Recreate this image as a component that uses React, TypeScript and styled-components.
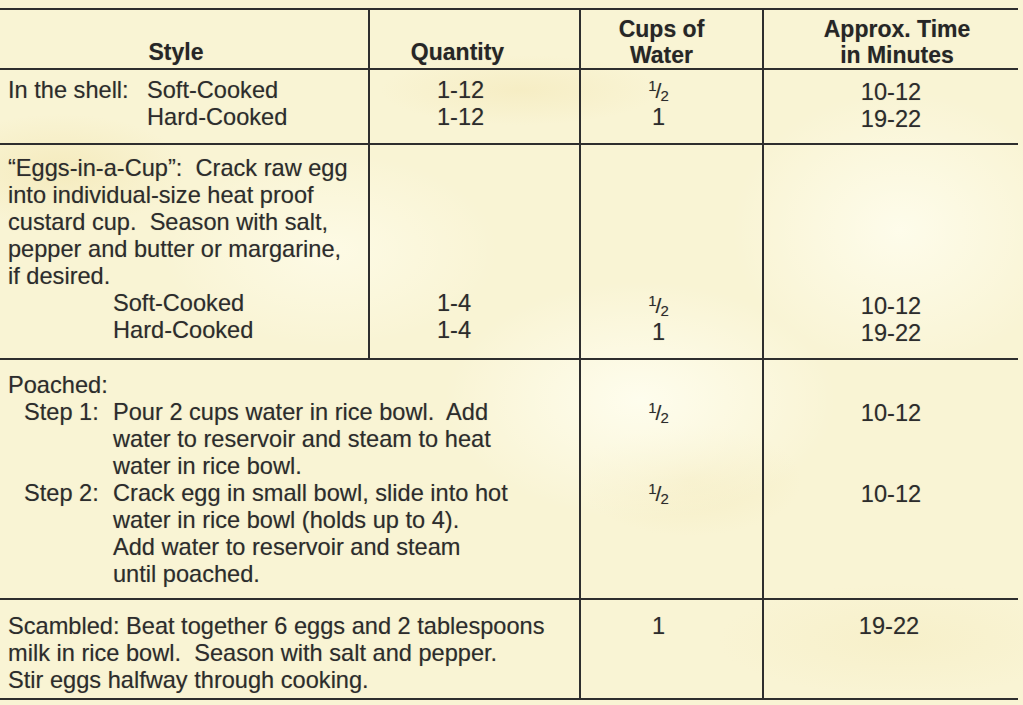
import React from "react";
import styled, { createGlobalStyle } from "styled-components";

const GlobalStyle = createGlobalStyle`
  html, body {
    margin: 0;
    padding: 0;
  }
  body {
    width: 1023px;
    height: 705px;
    overflow: hidden;
    background-color: #f9f4d4;
    background-image:
      radial-gradient(ellipse 280px 170px at 640px 400px, rgba(255, 254, 240, 0.9), transparent 70%),
      radial-gradient(ellipse 240px 200px at 900px 230px, rgba(255, 254, 240, 0.8), transparent 70%),
      radial-gradient(ellipse 240px 140px at 330px 250px, rgba(255, 253, 236, 0.7), transparent 70%),
      radial-gradient(ellipse 180px 80px at 60px 170px, rgba(243, 231, 180, 0.7), transparent 70%),
      radial-gradient(ellipse 200px 50px at 520px 90px, rgba(244, 233, 186, 0.6), transparent 70%),
      radial-gradient(ellipse 160px 80px at 690px 480px, rgba(244, 234, 188, 0.6), transparent 70%),
      radial-gradient(ellipse 260px 80px at 900px 640px, rgba(245, 236, 192, 0.5), transparent 70%);
    font-family: "Liberation Sans", Arial, sans-serif;
    color: #2c2c2c;
  }
`;

const Page = styled.div`
  padding-top: 8px;
`;

const LINE = "2px solid #2e2e2e";

const Table = styled.div`
  display: grid;
  grid-template-columns: 370px 211px 183px 254px;
  grid-template-rows: 62px 75px 215px 240px 100px;
  width: 1018px;
  font-size: 23.6px;
  text-shadow: 0 0 1px rgba(40, 40, 40, 0.3);
`;

const HeadCell = styled.div<{ $pl?: number; $pr?: number; $pb?: number; $last?: boolean }>`
  display: flex;
  flex-direction: column;
  justify-content: flex-end;
  align-items: center;
  text-align: center;
  font-weight: bold;
  font-size: 23px;
  line-height: 26px;
  border-top: ${LINE};
  border-bottom: ${LINE};
  border-right: ${(p) => (p.$last ? "none" : LINE)};
  padding-left: ${(p) => p.$pl ?? 0}px;
  padding-right: ${(p) => p.$pr ?? 0}px;
  padding-bottom: ${(p) => p.$pb ?? 0}px;
  color: #262626;
`;

const Cell = styled.div<{
  $top: number;
  $span?: number;
  $last?: boolean;
  $align?: "left" | "center";
  $pl?: number;
  $pr?: number;
}>`
  grid-column: span ${(p) => p.$span ?? 1};
  border-bottom: ${LINE};
  border-right: ${(p) => (p.$last ? "none" : LINE)};
  padding-top: ${(p) => p.$top}px;
  padding-left: ${(p) => p.$pl ?? 8}px;
  padding-right: ${(p) => p.$pr ?? 0}px;
  text-align: ${(p) => p.$align ?? "left"};
  line-height: 27px;
`;

const Line = styled.div`
  white-space: pre;
  min-height: 27px;
`;

const Shell = styled.div`
  display: grid;
  grid-template-columns: 139px auto;
`;

const Indented = styled.div<{ $indent: number }>`
  padding-left: ${(p) => p.$indent}px;
`;

const Steps = styled.div`
  display: grid;
  grid-template-columns: 89px 1fr;
  margin-left: 16px;
`;

const Frac = styled.span`
  display: inline-block;
  line-height: 1;
  white-space: nowrap;
`;

const Num = styled.span`
  font-size: 15px;
  vertical-align: 0.45em;
`;

const Slash = styled.span`
  font-size: 21px;
  margin: 0 -1px;
`;

const Den = styled.span`
  font-size: 15px;
  vertical-align: -0.2em;
`;

const Half = () => (
  <Frac>
    <Num>1</Num>
    <Slash>/</Slash>
    <Den>2</Den>
  </Frac>
);

const renderLines = (lines: React.ReactNode[]) =>
  lines.map((l, i) => <Line key={i}>{l}</Line>);

export default function App() {
  return (
    <>
      <GlobalStyle />
      <Page>
        <Table>
          <HeadCell $pr={16} $pb={3}>Style</HeadCell>
          <HeadCell $pr={34} $pb={3}>Quantity</HeadCell>
          <HeadCell $pr={20}>
            <div>Cups of</div>
            <div>Water</div>
          </HeadCell>
          <HeadCell $pl={12} $last>
            <div>Approx. Time</div>
            <div>in Minutes</div>
          </HeadCell>

          {/* in the shell */}
          <Cell $top={7}>
            <Shell>
              <Line>In the shell:</Line>
              <Line>Soft-Cooked</Line>
              <Line />
              <Line>Hard-Cooked</Line>
            </Shell>
          </Cell>
          <Cell $top={7} $pl={67}>
            {renderLines(["1-12", "1-12"])}
          </Cell>
          <Cell $top={7} $align="center" $pl={0} $pr={26}>
            {renderLines([<Half key="h" />, "1"])}
          </Cell>
          <Cell $top={9} $align="center" $pl={0} $last>
            {renderLines(["10-12", "19-22"])}
          </Cell>

          {/* eggs in a cup */}
          <Cell $top={10}>
            {renderLines([
              "\u201cEggs-in-a-Cup\u201d:  Crack raw egg",
              "into individual-size heat proof",
              "custard cup.  Season with salt,",
              "pepper and butter or margarine,",
              "if desired.",
            ])}
            <Indented $indent={105}>
              {renderLines(["Soft-Cooked", "Hard-Cooked"])}
            </Indented>
          </Cell>
          <Cell $top={10} $pl={67}>
            {renderLines(["", "", "", "", "", "1-4", "1-4"])}
          </Cell>
          <Cell $top={12} $align="center" $pl={0} $pr={26}>
            {renderLines(["", "", "", "", "", <Half key="h" />, "1"])}
          </Cell>
          <Cell $top={13} $align="center" $pl={0} $last>
            {renderLines(["", "", "", "", "", "10-12", "19-22"])}
          </Cell>

          {/* poached */}
          <Cell $top={12} $span={2}>
            <Line>Poached:</Line>
            <Steps>
              <Line>Step 1:</Line>
              <div>
                {renderLines([
                  "Pour 2 cups water in rice bowl.  Add",
                  "water to reservoir and steam to heat",
                  "water in rice bowl.",
                ])}
              </div>
              <Line>Step 2:</Line>
              <div>
                {renderLines([
                  "Crack egg in small bowl, slide into hot",
                  "water in rice bowl (holds up to 4).",
                  "Add water to reservoir and steam",
                  "until poached.",
                ])}
              </div>
            </Steps>
          </Cell>
          <Cell $top={12} $align="center" $pl={0} $pr={26}>
            {renderLines(["", <Half key="a" />, "", "", <Half key="b" />])}
          </Cell>
          <Cell $top={13} $align="center" $pl={0} $last>
            {renderLines(["", "10-12", "", "", "10-12"])}
          </Cell>

          {/* scrambled */}
          <Cell $top={13} $span={2}>
            {renderLines([
              "Scambled: Beat together 6 eggs and 2 tablespoons",
              "milk in rice bowl.  Season with salt and pepper.",
              "Stir eggs halfway through cooking.",
            ])}
          </Cell>
          <Cell $top={13} $align="center" $pl={0} $pr={26}>
            {renderLines(["1"])}
          </Cell>
          <Cell $top={13} $align="center" $pl={0} $pr={4} $last>
            {renderLines(["19-22"])}
          </Cell>
        </Table>
      </Page>
    </>
  );
}
